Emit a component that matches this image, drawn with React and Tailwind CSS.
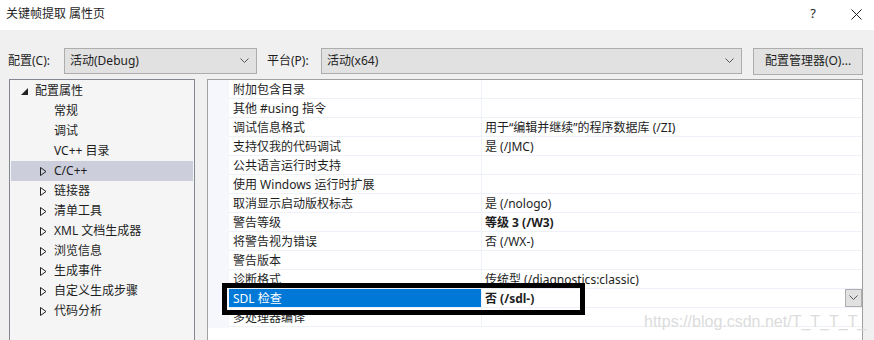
import React from "react"

const font = { fontFamily: '"Noto Sans", "Noto Sans CJK SC", sans-serif' }

const Chevron = ({ className = "" }) => (
	<svg width="9" height="6" viewBox="0 0 9 6" className={className}>
		<polyline points="0.5,0.5 4.5,4.5 8.5,0.5" fill="none" stroke="#555" strokeWidth="1" />
	</svg>
)

const Collapsed = () => (
	<svg width="7" height="9" viewBox="0 0 7 9">
		<polygon points="0.5,0.5 6,4.5 0.5,8.5" fill="none" stroke="#222" strokeWidth="1" />
	</svg>
)

const Expanded = () => (
	<svg width="7" height="7" viewBox="0 0 7 7">
		<polygon points="7,0 7,7 0,7" fill="#222" />
	</svg>
)

const tree = [
	{ label: "配置属性", level: 0, icon: "exp" },
	{ label: "常规", level: 1 },
	{ label: "调试", level: 1 },
	{ label: "VC++ 目录", level: 1 },
	{ label: "C/C++", level: 1, icon: "col", selected: true },
	{ label: "链接器", level: 1, icon: "col" },
	{ label: "清单工具", level: 1, icon: "col" },
	{ label: "XML 文档生成器", level: 1, icon: "col" },
	{ label: "浏览信息", level: 1, icon: "col" },
	{ label: "生成事件", level: 1, icon: "col" },
	{ label: "自定义生成步骤", level: 1, icon: "col" },
	{ label: "代码分析", level: 1, icon: "col" },
]

const props = [
	["附加包含目录", ""],
	["其他 #using 指令", ""],
	["调试信息格式", "用于“编辑并继续”的程序数据库 (/ZI)"],
	["支持仅我的代码调试", "是 (/JMC)"],
	["公共语言运行时支持", ""],
	["使用 Windows 运行时扩展", ""],
	["取消显示启动版权标志", "是 (/nologo)"],
	["警告等级", "等级 3 (/W3)", true],
	["将警告视为错误", "否 (/WX-)"],
	["警告版本", ""],
	["诊断格式", "传统型 (/diagnostics:classic)"],
	["SDL 检查", "否 (/sdl-)", true, true],
	["多处理器编译", ""],
]

const Dropdown = ({ value, width }) => (
	<div className={`h-[26px] ${width} border border-[#adadad] bg-[#e1e1e1] flex items-center justify-between pl-[5px] pr-[7px]`}>
		<span>{value}</span>
		<Chevron />
	</div>
)

export default function App() {
	return (
		<div className="relative w-[874px] h-[340px] overflow-hidden bg-[#f0f0f0] text-[12px] text-[#1e1e1e]" style={font}>
			<div className="h-[30px] bg-white flex items-center pl-[6px] pr-[12px] pb-[2px]">
				<span className="flex-1">关键帧提取 属性页</span>
				<span className="w-[16px] text-center mr-[30px] text-[13px]">?</span>
				<svg width="11" height="11" viewBox="0 0 11 11">
					<path d="M0.5 0.5 L10.5 10.5 M10.5 0.5 L0.5 10.5" stroke="#222" strokeWidth="1" />
				</svg>
			</div>

			<div className="flex items-center pt-[13px] pl-[8px] h-[49px]">
				<span className="w-[56px]">配置(C):</span>
				<Dropdown value="活动(Debug)" width="w-[193px]" />
				<span className="ml-[10px] w-[54px]">平台(P):</span>
				<Dropdown value="活动(x64)" width="w-[421px]" />
				<div className="ml-[11px] h-[27px] w-[110px] border border-[#adadad] bg-[#e1e1e1] flex items-center justify-center">
					配置管理器(O)...
				</div>
			</div>

			<div className="flex h-[270px]">
				<div className="ml-[9px] w-[186px] border border-[#828790] bg-[#f5f5f5] pt-[1px] px-[1px]">
					{tree.map((t) => (
						<div
							key={t.label}
							className={`h-[20px] flex items-center ${t.selected ? "bg-[#cccedb]" : ""}`}
						>
							<span className={`flex items-center ${t.level === 0 ? "w-[24px] pl-[10px]" : "w-[43px] pl-[29px]"}`}>
								{t.icon === "exp" && <Expanded />}
								{t.icon === "col" && <Collapsed />}
							</span>
							<span>{t.label}</span>
						</div>
					))}
				</div>

				<div className="ml-[12px] w-[656px] border-t border-l border-r border-[#a0a0a0] bg-white flex">
					<div className="w-[21px] h-[248px] bg-[#f5f7fc]" />
					<div className="flex-1">
						{props.map(([name, value, bold, selected]) => (
							<div key={name} className="h-[19px] flex border-b border-[#eef1f7]">
								<div
									className={`w-[252px] pl-[4px] pt-[1px] flex items-center ${selected ? "bg-[#0078d7] text-white" : ""}`}
								>
									{name}
								</div>
								<div className="flex-1 border-l border-[#eef1f7] pl-[3px] flex items-center justify-between">
									<span className={`pt-[1px] ${bold ? "font-bold" : ""}`}>{value}</span>
									{selected && (
										<div className="w-[17px] h-[18px] border border-[#adadad] bg-[#e1e1e1] flex items-center justify-center">
											<Chevron />
										</div>
									)}
								</div>
							</div>
						))}
					</div>
				</div>
			</div>

			<div className="absolute left-[222px] top-[283px] w-[363px] h-[32px] border-[5px] border-black" />

			<div
				className="absolute left-[644px] top-[310px] text-[16px] text-[#dcdcdc]"
				style={{ fontFamily: '"Liberation Sans", Arial, sans-serif' }}
			>
				https://blog.csdn.net/T_T_T_T_
			</div>
		</div>
	)
}
